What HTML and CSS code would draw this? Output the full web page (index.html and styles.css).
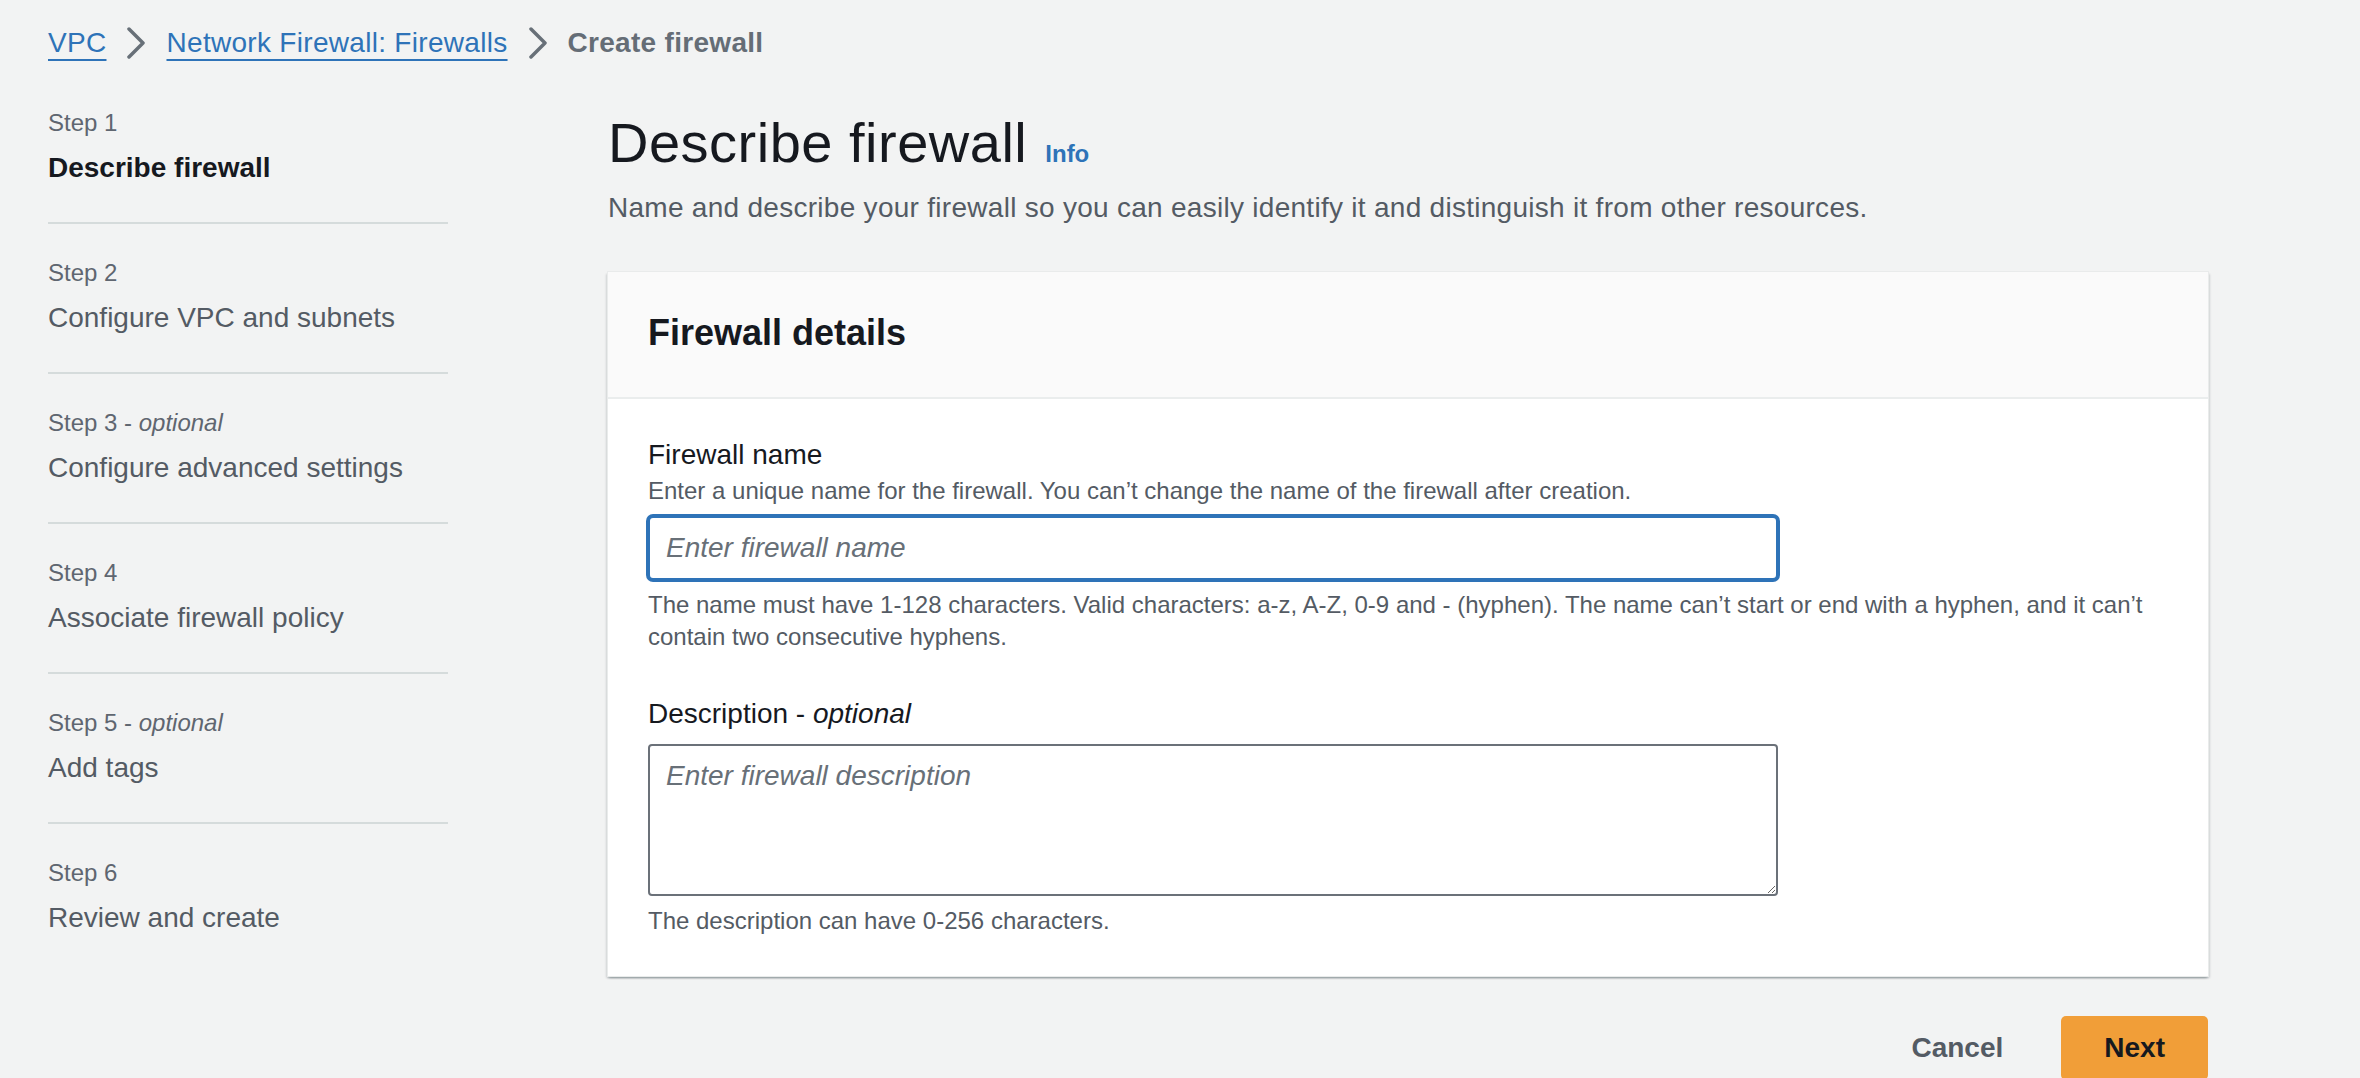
FILE: index.html
```html
<!DOCTYPE html>
<html lang="en">
<head>
<meta charset="utf-8">
<title>Create firewall</title>
<link rel="stylesheet" href="styles.css">
</head>
<body>
<div class="page">
  <nav class="breadcrumbs" aria-label="Breadcrumbs">
    <a class="crumb-link" href="#">VPC</a>
    <svg class="chev" viewBox="0 0 20 32" aria-hidden="true"><polyline points="3,2 17,16 3,30" /></svg>
    <a class="crumb-link" href="#">Network Firewall: Firewalls</a>
    <svg class="chev" viewBox="0 0 20 32" aria-hidden="true"><polyline points="3,2 17,16 3,30" /></svg>
    <span class="crumb-current">Create firewall</span>
  </nav>

  <div class="layout">
    <ol class="steps">
      <li class="step active">
        <div class="step-num">Step 1</div>
        <div class="step-title">Describe firewall</div>
      </li>
      <li class="step">
        <div class="step-num">Step 2</div>
        <div class="step-title">Configure VPC and subnets</div>
      </li>
      <li class="step">
        <div class="step-num">Step 3 - <i>optional</i></div>
        <div class="step-title">Configure advanced settings</div>
      </li>
      <li class="step">
        <div class="step-num">Step 4</div>
        <div class="step-title">Associate firewall policy</div>
      </li>
      <li class="step">
        <div class="step-num">Step 5 - <i>optional</i></div>
        <div class="step-title">Add tags</div>
      </li>
      <li class="step">
        <div class="step-num">Step 6</div>
        <div class="step-title">Review and create</div>
      </li>
    </ol>

    <main class="main">
      <h1 class="title-row"><span class="title-text">Describe firewall</span><a class="info" href="#">Info</a></h1>
      <p class="subtitle">Name and describe your firewall so you can easily identify it and distinguish it from other resources.</p>

      <section class="card">
        <div class="card-header">
          <h2 class="card-title">Firewall details</h2>
        </div>
        <div class="card-body">
          <div class="field">
            <label class="field-label" for="fw-name">Firewall name</label>
            <div class="field-desc">Enter a unique name for the firewall. You can’t change the name of the firewall after creation.</div>
            <input class="text-input is-focused" id="fw-name" type="text" placeholder="Enter firewall name">
            <div class="constraint">The name must have 1-128 characters. Valid characters: a-z, A-Z, 0-9 and - (hyphen). The name can’t start or end with a hyphen, and it can’t contain two consecutive hyphens.</div>
          </div>
          <div class="field field-second">
            <label class="field-label" for="fw-desc">Description - <i>optional</i></label>
            <textarea class="text-area" id="fw-desc" placeholder="Enter firewall description"></textarea>
            <div class="constraint">The description can have 0-256 characters.</div>
          </div>
        </div>
      </section>

      <div class="actions">
        <button class="btn btn-link" type="button">Cancel</button>
        <button class="btn btn-primary" type="button">Next</button>
      </div>
    </main>
  </div>
</div>
</body>
</html>
```

FILE: styles.css
```css
* {
  box-sizing: border-box;
}

html, body {
  margin: 0;
  padding: 0;
  background: #f2f3f3;
}

body {
  font-family: "Liberation Sans", Arial, sans-serif;
  color: #16191f;
  font-size: 28px;
  line-height: 40px;
  overflow: hidden;
}

.page {
  padding: 23px 152px 0 48px;
}

/* Breadcrumbs */
.breadcrumbs {
  display: flex;
  align-items: center;
  gap: 20px;
  height: 40px;
  font-size: 28px;
  line-height: 40px;
  letter-spacing: 0.3px;
}

.crumb-link {
  color: #2e73b8;
  text-decoration: underline;
  text-decoration-thickness: 2px;
  text-underline-offset: 7px;
}

.chev {
  width: 20px;
  height: 32px;
  flex: none;
}

.chev polyline {
  fill: none;
  stroke: #687078;
  stroke-width: 3.5;
  stroke-linecap: round;
  stroke-linejoin: round;
}

.crumb-current {
  color: #656d76;
  font-weight: 700;
}

/* Layout */
.layout {
  display: grid;
  grid-template-columns: 400px 1600px;
  column-gap: 160px;
  margin-top: 44px;
  align-items: start;
}

/* Steps navigation */
.steps {
  list-style: none;
  margin: 0;
  padding: 0;
}

.step {
  padding: 33px 0 34px;
  border-bottom: 2px solid #d5dbdb;
}

.step:first-child {
  padding-top: 0;
}

.step:last-child {
  border-bottom: none;
}

.step-num {
  font-size: 24px;
  line-height: 32px;
  color: #5f6670;
}

.step-title {
  margin-top: 9px;
  font-size: 28px;
  line-height: 40px;
  color: #545b64;
}

.step.active .step-title {
  color: #16191f;
  font-weight: 700;
}

/* Main */
.title-row {
  display: flex;
  align-items: baseline;
  gap: 18px;
  margin: 0;
  font-size: 56px;
  line-height: 72px;
  font-weight: 400;
  color: #16191f;
}

.title-text {
  letter-spacing: 0.5px;
}

.info {
  font-size: 24px;
  line-height: 32px;
  font-weight: 700;
  color: #2e73b8;
  text-decoration: none;
}

.subtitle {
  margin: 9px 0 0;
  font-size: 28px;
  line-height: 40px;
  letter-spacing: 0.28px;
  color: #545b64;
}

/* Card */
.card {
  margin-top: 44px;
  background: #ffffff;
  box-shadow: 0 0 0 1px #e9ebeb, 0 2px 2px rgba(0, 28, 36, 0.3), 2px 2px 2px rgba(0, 28, 36, 0.12), -2px 2px 2px rgba(0, 28, 36, 0.12);
}

.card-header {
  background: #fafafa;
  padding: 39px 40px 42px;
  border-bottom: 2px solid #eaeded;
}

.card-title {
  margin: 0;
  font-size: 36px;
  line-height: 44px;
  font-weight: 700;
  color: #16191f;
}

.card-body {
  padding: 36px 40px 39px;
}

.field-label {
  display: block;
  font-size: 28px;
  line-height: 40px;
  color: #16191f;
}

.field-desc {
  font-size: 24px;
  line-height: 32px;
  color: #545b64;
}

.text-input,
.text-area {
  display: block;
  width: 1130px;
  font-family: inherit;
  font-size: 28px;
  line-height: 40px;
  color: #16191f;
  background: #ffffff;
  border: 2px solid #6b7179;
  border-radius: 4px;
  outline: none;
}

.text-input {
  margin-top: 9px;
  height: 64px;
  padding: 0 16px;
}

.text-input.is-focused {
  border-color: #2e73b8;
  box-shadow: 0 0 0 2px #2e73b8;
  border-radius: 5px;
}

.text-area {
  margin-top: 10px;
  height: 152px;
  padding: 10px 16px;
  resize: vertical;
}

.text-input::placeholder,
.text-area::placeholder {
  color: #687078;
  font-style: italic;
  opacity: 1;
}

.constraint {
  margin-top: 9px;
  font-size: 24px;
  line-height: 32px;
  color: #545b64;
}

.field-second {
  margin-top: 41px;
}

/* Actions */
.actions {
  display: flex;
  justify-content: flex-end;
  gap: 18px;
  margin-top: 40px;
}

.btn {
  height: 64px;
  padding: 0 43px;
  font-family: inherit;
  font-size: 28px;
  line-height: 40px;
  font-weight: 700;
  border: none;
  border-radius: 5px;
  cursor: pointer;
}

.btn-link {
  padding: 0 40px;
  background: transparent;
  color: #545b64;
}

.btn-primary {
  background: #f19e38;
  color: #16191f;
}
```
